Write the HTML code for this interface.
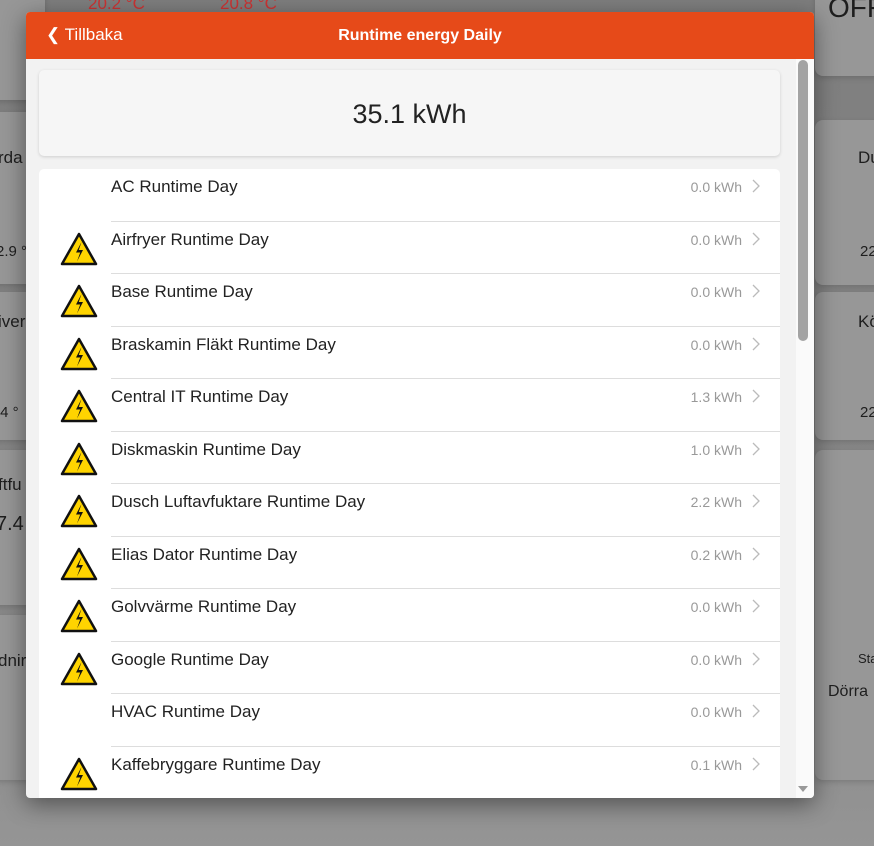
<!DOCTYPE html>
<html><head><meta charset="utf-8"><style>
*{box-sizing:border-box;margin:0;padding:0}
body{width:874px;height:846px;overflow:hidden;background:linear-gradient(180deg,#7e7e7e,#8a8a8a 80%,#959595);font-family:"Liberation Sans",sans-serif;position:relative}
.bg{position:absolute;background:#979797;border-radius:8px;box-shadow:0 2px 6px rgba(0,0,0,.15)}
.bt{position:absolute;color:#1e1e1e;font-size:17px}
.modal{position:absolute;left:26px;top:12px;width:788px;height:786px;background:#f2f2f2;border-radius:4px;overflow:hidden;box-shadow:0 6px 24px rgba(0,0,0,.45)}
.hdr{height:47px;background:#e64a19;color:#fff;position:relative}
.hdr .back{position:absolute;left:20px;top:13px;font-size:17px}
.hdr .title{position:absolute;left:0;width:788px;text-align:center;top:15px;font-size:16px;font-weight:bold}
.track{position:absolute;left:770px;top:47px;width:18px;height:739px;background:#fafafa}
.thumb{position:absolute;left:772px;top:48px;width:10px;height:281px;background:#a3a3a3;border-radius:5px}
.arr{position:absolute;left:772px;top:774px;width:0;height:0;border-left:5px solid transparent;border-right:5px solid transparent;border-top:6px solid #999}
.sum{position:absolute;left:13px;top:58px;width:741px;height:86px;background:#f6f6f6;border-radius:5px;box-shadow:0 1px 3px rgba(0,0,0,.15);text-align:center;font-size:27px;color:#222;line-height:88px}
.list{position:absolute;left:13px;top:157px;width:741px;height:640px;background:#fff;border-radius:5px}
.row{position:absolute;left:0;width:741px;height:52.5px}
.row .n{position:absolute;left:72px;top:8px;font-size:17px;color:#222}
.row .v{position:absolute;right:38px;top:10px;font-size:14px;color:#999}
.row .c{position:absolute;right:20px;top:10px}
.row .sep{position:absolute;left:72px;right:0;bottom:0;height:1px;background:#ddd}
.row .w{position:absolute;left:21px;top:10px}
</style></head><body>
<div class="bg" style="left:-10px;top:-10px;width:55px;height:110px"></div>
<div class="bg" style="left:-10px;top:112px;width:55px;height:172px"></div>
<div class="bg" style="left:-10px;top:292px;width:55px;height:148px"></div>
<div class="bg" style="left:-10px;top:450px;width:55px;height:155px"></div>
<div class="bg" style="left:-10px;top:615px;width:55px;height:165px"></div>
<div class="bg" style="left:815px;top:-10px;width:70px;height:86px"></div>
<div class="bg" style="left:815px;top:120px;width:70px;height:165px"></div>
<div class="bg" style="left:815px;top:292px;width:70px;height:148px"></div>
<div class="bg" style="left:815px;top:450px;width:70px;height:330px"></div>
<div class="bt" style="left:-2px;top:148px">rda</div>
<div class="bt" style="left:-4px;top:243px;font-size:15px">2.9 °</div>
<div class="bt" style="left:-2px;top:312px">iver</div>
<div class="bt" style="left:-4px;top:404px;font-size:15px">.4 °</div>
<div class="bt" style="left:-2px;top:475px">ftfu</div>
<div class="bt" style="left:-4px;top:513px;font-size:20px">7.4</div>
<div class="bt" style="left:-2px;top:651px">dnir</div>
<div class="bt" style="left:828px;top:-8px;font-size:28px">OFF</div>
<div class="bt" style="left:858px;top:148px">Du</div>
<div class="bt" style="left:858px;top:312px">Kö</div>
<div class="bt" style="left:860px;top:243px;font-size:15px">22</div>
<div class="bt" style="left:860px;top:404px;font-size:15px">22</div>
<div class="bt" style="left:858px;top:651px;font-size:13px">Sta</div>
<div class="bt" style="left:828px;top:683px;font-size:16px">Dörra</div>
<div class="bt" style="left:88px;top:-6px;color:#c33;font-size:17px">20.2 °C</div>
<div class="bt" style="left:220px;top:-6px;color:#c33;font-size:17px">20.8 °C</div>
<svg width="0" height="0" style="position:absolute"><defs>
<symbol id="w" viewBox="0 0 38 34"><path d="M19 2L36 32H2Z" fill="#ffd400" stroke="#111" stroke-width="2.5" stroke-linejoin="round"/><path d="M21.5 10L16 20.5h4.2L17 29.5l6-11.5h-4.2L21.5 10z" fill="#111"/></symbol>
<symbol id="ch" viewBox="0 0 8 14"><path d="M1 1l6 6-6 6" fill="none" stroke="#bbb" stroke-width="1.3"/></symbol>
</defs></svg>
<div class="modal">
<div class="hdr"><div class="back">&#x276E; Tillbaka</div><div class="title">Runtime energy Daily</div></div>
<div class="sum">35.1 kWh</div>
<div class="list">
<div class="row" style="top:0"><div class="n">AC Runtime Day</div><div class="v">0.0 kWh</div><svg class="c" width="8" height="14"><use href="#ch"/></svg><div class="sep"></div></div>
<div class="row" style="top:52.5px"><svg class="w" width="38" height="34"><use href="#w"/></svg><div class="n">Airfryer Runtime Day</div><div class="v">0.0 kWh</div><svg class="c" width="8" height="14"><use href="#ch"/></svg><div class="sep"></div></div>
<div class="row" style="top:105px"><svg class="w" width="38" height="34"><use href="#w"/></svg><div class="n">Base Runtime Day</div><div class="v">0.0 kWh</div><svg class="c" width="8" height="14"><use href="#ch"/></svg><div class="sep"></div></div>
<div class="row" style="top:157.5px"><svg class="w" width="38" height="34"><use href="#w"/></svg><div class="n">Braskamin Fläkt Runtime Day</div><div class="v">0.0 kWh</div><svg class="c" width="8" height="14"><use href="#ch"/></svg><div class="sep"></div></div>
<div class="row" style="top:210px"><svg class="w" width="38" height="34"><use href="#w"/></svg><div class="n">Central IT Runtime Day</div><div class="v">1.3 kWh</div><svg class="c" width="8" height="14"><use href="#ch"/></svg><div class="sep"></div></div>
<div class="row" style="top:262.5px"><svg class="w" width="38" height="34"><use href="#w"/></svg><div class="n">Diskmaskin Runtime Day</div><div class="v">1.0 kWh</div><svg class="c" width="8" height="14"><use href="#ch"/></svg><div class="sep"></div></div>
<div class="row" style="top:315px"><svg class="w" width="38" height="34"><use href="#w"/></svg><div class="n">Dusch Luftavfuktare Runtime Day</div><div class="v">2.2 kWh</div><svg class="c" width="8" height="14"><use href="#ch"/></svg><div class="sep"></div></div>
<div class="row" style="top:367.5px"><svg class="w" width="38" height="34"><use href="#w"/></svg><div class="n">Elias Dator Runtime Day</div><div class="v">0.2 kWh</div><svg class="c" width="8" height="14"><use href="#ch"/></svg><div class="sep"></div></div>
<div class="row" style="top:420px"><svg class="w" width="38" height="34"><use href="#w"/></svg><div class="n">Golvvärme Runtime Day</div><div class="v">0.0 kWh</div><svg class="c" width="8" height="14"><use href="#ch"/></svg><div class="sep"></div></div>
<div class="row" style="top:472.5px"><svg class="w" width="38" height="34"><use href="#w"/></svg><div class="n">Google Runtime Day</div><div class="v">0.0 kWh</div><svg class="c" width="8" height="14"><use href="#ch"/></svg><div class="sep"></div></div>
<div class="row" style="top:525px"><div class="n">HVAC Runtime Day</div><div class="v">0.0 kWh</div><svg class="c" width="8" height="14"><use href="#ch"/></svg><div class="sep"></div></div>
<div class="row" style="top:577.5px"><svg class="w" width="38" height="34"><use href="#w"/></svg><div class="n">Kaffebryggare Runtime Day</div><div class="v">0.1 kWh</div><svg class="c" width="8" height="14"><use href="#ch"/></svg></div>
</div>
<div class="track"></div><div class="thumb"></div><div class="arr"></div>
</div>
</body></html>
